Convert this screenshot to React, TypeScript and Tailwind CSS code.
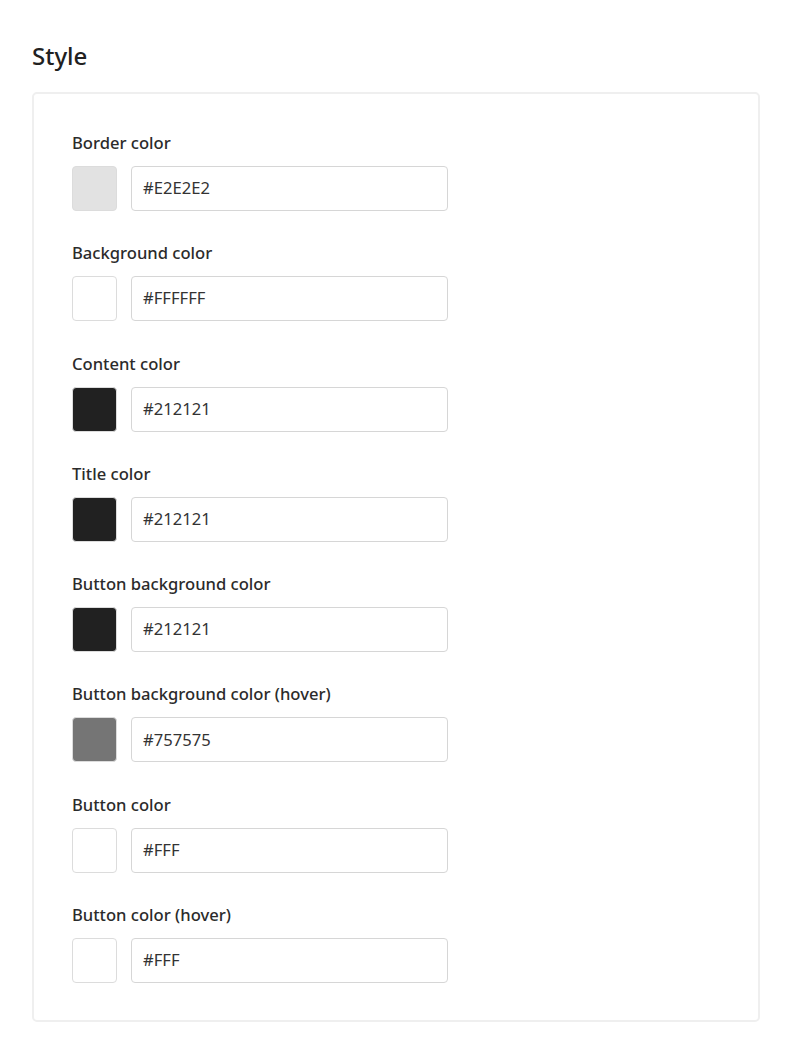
import React from "react";

const rows = [
  { label: "Border color", swatch: "#E2E2E2", value: "#E2E2E2" },
  { label: "Background color", swatch: "#FFFFFF", value: "#FFFFFF" },
  { label: "Content color", swatch: "#212121", value: "#212121" },
  { label: "Title color", swatch: "#212121", value: "#212121" },
  { label: "Button background color", swatch: "#212121", value: "#212121" },
  { label: "Button background color (hover)", swatch: "#757575", value: "#757575" },
  { label: "Button color", swatch: "#FFFFFF", value: "#FFF" },
  { label: "Button color (hover)", swatch: "#FFFFFF", value: "#FFF" },
];

export default function App() {
  return (
    <div
      className="min-h-[1058px] w-[794px] bg-white text-[#212121]"
      style={{ fontFamily: '"Noto Sans", "Open Sans", sans-serif' }}
    >
      <div className="pl-[32px] pt-[38px]">
        <h1 className="text-[24px] leading-[36px] font-medium text-[#212121]">Style</h1>
        <div className="mt-[18px] w-[728px] rounded-[5px] border-2 border-[#efefef] px-[38px] pt-[37px] pb-[37px]">
          <div className="flex flex-col gap-[30.3px]">
            {rows.map((r) => (
              <div key={r.label} className="flex flex-col">
                <div className="text-[16.6px] leading-[24px] font-medium text-[#2b2b2b]">{r.label}</div>
                <div className="mt-[11px] flex gap-[14px]">
                  <div
                    className="h-[45px] w-[45px] rounded-[4px] border border-[#dcdcdc]"
                    style={{ backgroundColor: r.swatch }}
                  />
                  <div className="flex h-[45px] w-[317px] items-center rounded-[4px] border border-[#d6d6d6] bg-white px-[11px] text-[16.6px] text-[#333]">
                    {r.value}
                  </div>
                </div>
              </div>
            ))}
          </div>
        </div>
      </div>
    </div>
  );
}
